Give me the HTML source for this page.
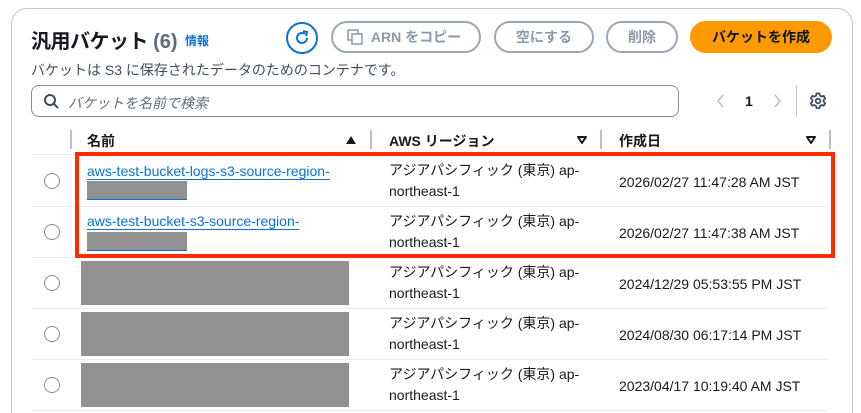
<!DOCTYPE html>
<html><head><meta charset="utf-8"><style>
*{box-sizing:border-box;margin:0;padding:0}
html,body{width:861px;height:413px;overflow:hidden}
body{background:#fff;font-family:"Liberation Sans","Noto Sans CJK JP",sans-serif;color:#16191f;position:relative}
.a{position:absolute;white-space:nowrap}
.panel{position:absolute;left:11px;top:8px;width:842px;height:420px;border:1px solid #c6c6cd;border-radius:16px}
.btn{position:absolute;top:21px;height:32px;border:2px solid #9ba7b6;border-radius:16px;color:#8d99a8;font-size:14px;font-weight:bold;line-height:28px;text-align:center}
.sep{position:absolute;left:32px;width:796px;height:1px;background:#e9ebed}
.radio{position:absolute;left:44px;width:16px;height:16px;border:1.5px solid #8c8c94;border-radius:50%}
.reg{position:absolute;left:389px;font-size:14px;line-height:21px}
.dt{position:absolute;left:619px;font-size:14px}
.lnk{position:absolute;left:87px;font-size:14px;color:#0972d3;text-decoration:underline;text-underline-offset:3px}
.g{position:absolute;background:#919191}
.hd{position:absolute;top:131px;font-size:14px;font-weight:bold}
.vl{position:absolute;top:130px;width:2px;height:19px;background:#b6bec9}
</style></head><body>
<div class="panel"></div>
<div class="a" style="left:31px;top:25px;font-size:20px;font-weight:bold;letter-spacing:-0.5px">汎用バケット <span style="color:#5f6b7a;letter-spacing:0">(6)</span></div>
<div class="a" style="left:185px;top:32px;font-size:12px;font-weight:bold;color:#0972d3">情報</div>
<div class="a" style="left:286px;top:22px;width:32px;height:32px;border:2px solid #0972d3;border-radius:50%"></div>
<svg class="a" style="left:293px;top:29px" width="18" height="18" viewBox="0 0 18 18"><path d="M14 9a5 5 0 1 1-2-4" fill="none" stroke="#0972d3" stroke-width="2"/><path d="M10 2l4 1-1 4" fill="none" stroke="#0972d3" stroke-width="2"/></svg>
<div class="btn" style="left:331px;width:150px;padding-left:20px">ARN をコピー</div>
<svg class="a" style="left:347px;top:29px" width="16" height="16"><rect x="1" y="1" width="10" height="10" fill="none" stroke="#8d99a8" stroke-width="1.5"/><rect x="5" y="5" width="10" height="10" fill="#fff" stroke="#8d99a8" stroke-width="1.5"/></svg>
<div class="btn" style="left:494px;width:100px">空にする</div>
<div class="btn" style="left:606px;width:72px">削除</div>
<div class="btn" style="left:690px;width:142px;background:#ff9900;border-color:#ff9900;color:#0f141a">バケットを作成</div>
<div class="a" style="left:31px;top:60px;font-size:14px;color:#414d5c">バケットは S3 に保存されたデータのためのコンテナです。</div>
<div class="a" style="left:31px;top:85px;width:648px;height:32px;border:1px solid #8c8c94;border-radius:8px"></div>
<svg class="a" style="left:43px;top:93px" width="16" height="16"><circle cx="7" cy="7" r="5" fill="none" stroke="#414d5c" stroke-width="2"/><path d="M11 11l4 4" stroke="#414d5c" stroke-width="2"/></svg>
<div class="a" style="left:68px;top:93px;font-size:14px;font-style:italic;color:#5f6b7a">バケットを名前で検索</div>
<svg class="a" style="left:716px;top:94px" width="10" height="14"><path d="M7 1L2 7l5 6" fill="none" stroke="#b6bec9" stroke-width="1.5"/></svg>
<div class="a" style="left:745px;top:93px;font-size:14px;font-weight:bold">1</div>
<svg class="a" style="left:772px;top:94px" width="10" height="14"><path d="M3 1l5 6-5 6" fill="none" stroke="#b6bec9" stroke-width="1.5"/></svg>
<div class="a" style="left:796px;top:85px;width:1px;height:32px;background:#c6c6cd"></div>
<svg class="a" style="left:809px;top:92px" width="18" height="18" viewBox="0 0 18 18"><path d="M7.5 1.5h3l.5 2.2 1.6.9 2.1-.8 1.5 2.6-1.6 1.5v1.8l1.6 1.5-1.5 2.6-2.1-.8-1.6.9-.5 2.2h-3l-.5-2.2-1.6-.9-2.1.8-1.5-2.6 1.6-1.5V7.9L1.8 6.4l1.5-2.6 2.1.8L7 3.7z" fill="none" stroke="#414d5c" stroke-width="1.8" stroke-linejoin="round"/><circle cx="9" cy="9" r="2.3" fill="none" stroke="#414d5c" stroke-width="1.8"/></svg>
<div class="vl" style="left:70px"></div>
<div class="hd" style="left:87px">名前</div>
<svg class="a" style="left:345px;top:135px" width="12" height="10"><path d="M1 9L6 1l5 8z" fill="#16191f"/></svg>
<div class="vl" style="left:370px"></div>
<div class="hd" style="left:389px">AWS リージョン</div>
<svg class="a" style="left:576px;top:135px" width="12" height="10"><path d="M2 2h8L6 8z" fill="none" stroke="#16191f" stroke-width="2" stroke-linejoin="round"/></svg>
<div class="vl" style="left:600px"></div>
<div class="hd" style="left:619px">作成日</div>
<svg class="a" style="left:805px;top:135px" width="12" height="10"><path d="M2 2h8L6 8z" fill="none" stroke="#16191f" stroke-width="2" stroke-linejoin="round"/></svg>
<div class="vl" style="left:829px"></div>
<div class="sep" style="top:154px"></div>
<div class="sep" style="top:206px"></div>
<div class="sep" style="top:257px"></div>
<div class="sep" style="top:308px"></div>
<div class="sep" style="top:359px"></div>
<div class="sep" style="top:410px"></div>

<div class="radio" style="top:173px"></div>
<div class="lnk" style="top:163px">aws-test-bucket-logs-s3-source-region-</div>
<div class="g" style="left:87px;top:181px;width:100px;height:19px;border-bottom:1px solid #0972d3"></div>
<div class="reg" style="top:160px">アジアパシフィック (東京) ap-<br>northeast-1</div>
<div class="dt" style="top:174px">2026/02/27 11:47:28 AM JST</div>

<div class="radio" style="top:224px"></div>
<div class="lnk" style="top:213px">aws-test-bucket-s3-source-region-</div>
<div class="g" style="left:87px;top:232px;width:100px;height:19px;border-bottom:1px solid #0972d3"></div>
<div class="reg" style="top:211px">アジアパシフィック (東京) ap-<br>northeast-1</div>
<div class="dt" style="top:225px">2026/02/27 11:47:38 AM JST</div>

<div class="radio" style="top:275px"></div>
<div class="g" style="left:81px;top:261px;width:268px;height:44px"></div>
<div class="reg" style="top:262px">アジアパシフィック (東京) ap-<br>northeast-1</div>
<div class="dt" style="top:276px">2024/12/29 05:53:55 PM JST</div>

<div class="radio" style="top:326px"></div>
<div class="g" style="left:81px;top:312px;width:268px;height:44px"></div>
<div class="reg" style="top:313px">アジアパシフィック (東京) ap-<br>northeast-1</div>
<div class="dt" style="top:327px">2024/08/30 06:17:14 PM JST</div>

<div class="radio" style="top:377px"></div>
<div class="g" style="left:81px;top:363px;width:268px;height:44px"></div>
<div class="reg" style="top:364px">アジアパシフィック (東京) ap-<br>northeast-1</div>
<div class="dt" style="top:378px">2023/04/17 10:19:40 AM JST</div>

<div class="a" style="left:75px;top:152px;width:760px;height:106px;border:4px solid #ff2a00"></div>
</body></html>
